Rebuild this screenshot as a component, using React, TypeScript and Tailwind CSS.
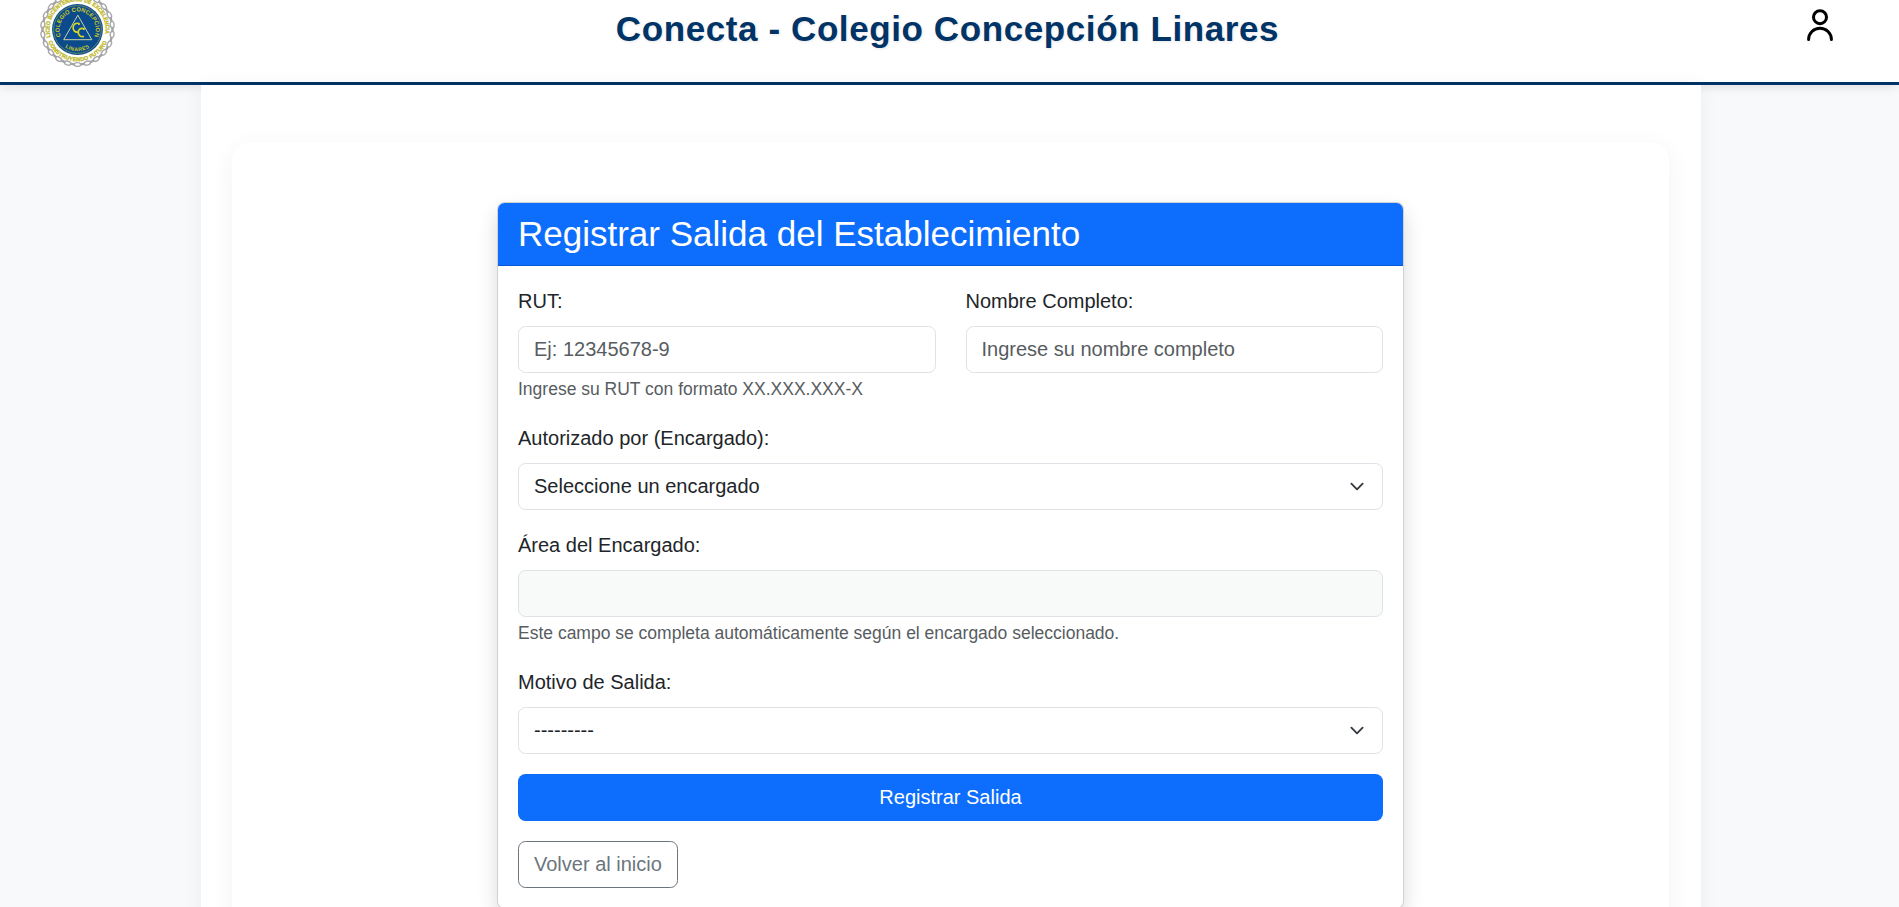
import type { ReactNode } from "react";

const inputBase =
  "h-[47px] w-full rounded-[7.5px] border border-[#dee2e6] px-[15px] text-[20px] leading-[30px] text-[#212529] outline-none";

const LINKS = Array.from({ length: 22 }, (_, i) => (i * 360) / 22);

function Logo() {
  return (
    <svg width="75" height="75" viewBox="-37.5 -37.5 75 75" className="block shrink-0" aria-hidden="true">
      <defs>
        <path id="ringTop" d="M-26.9 7.6 A28 28 0 1 1 26.9 7.6" />
        <path id="ringBottom" d="M-30 10.5 A31.8 31.8 0 0 0 30 10.5" />
        <path id="discTop" d="M-16 8.5 A18.1 18.1 0 1 1 16 8.5" />
        <path id="discBottom" d="M-18 12 A21.6 21.6 0 0 0 18 12" />
      </defs>
      <g fill="none">
        {LINKS.map((a) => (
          <g key={a} transform={`rotate(${a})`}>
            <ellipse cx="0" cy="-35" rx="3.2" ry="1.9" stroke="#a9a9ad" strokeWidth="1.4" />
            <path d="M3.6 -34.8 L6.4 -34.4" stroke="#a2a2a6" strokeWidth="2.4" strokeLinecap="round" />
          </g>
        ))}
      </g>
      <circle r="25.4" fill="#0b4b8b" />
      <circle r="23.9" fill="none" stroke="#7f9d62" strokeWidth="0.7" />
      <g fontFamily="Liberation Sans, Arial, sans-serif" fontWeight="700" fill="#d0cc22">
        <text fontSize="5.8" textLength="100" lengthAdjust="spacingAndGlyphs" fill="#bdb824" stroke="#bdb824" strokeWidth="0.3">
          <textPath href="#ringTop">LICEO BICENTENARIO DE EXCELENCIA</textPath>
        </text>
        <text fontSize="5.5" textAnchor="middle" letterSpacing="0.15" fill="#bdb824" stroke="#bdb824" strokeWidth="0.3">
          <textPath href="#ringBottom" startOffset="50%">CONSTRUYENDO FUTURO</textPath>
        </text>
        <text fontSize="5.9" textAnchor="middle" letterSpacing="0.1">
          <textPath href="#discTop" startOffset="50%">COLEGIO CONCEPCION</textPath>
        </text>
        <text fontSize="5.2" textAnchor="middle" letterSpacing="0.5">
          <textPath href="#discBottom" startOffset="50%">LINARES</textPath>
        </text>
      </g>
      <path d="M0.3 -14.3 L14.3 10.2 H-13.8 Z" fill="#0a4c93" stroke="#c9d3a0" strokeWidth="1" />
      <g fill="none" stroke="#dcd820" strokeWidth="1.7">
        <path d="M1.4 -4.6 V-6 C-6 -8 -6.4 3.4 0.6 2.6" />
        <path d="M6.4 0.6 V-0.9 C-1 -3 -1.4 8.4 6.6 7" />
      </g>
    </svg>
  );
}

function UserIcon() {
  return (
    <svg width="30" height="40" viewBox="0 0 30 40" fill="none" stroke="#000" strokeWidth="3" strokeLinecap="round" aria-hidden="true">
      <circle cx="15" cy="12.2" r="6.5" />
      <path d="M3.6 34.6 C3.6 28.2 8.7 23.2 15 23.2 C21.3 23.2 26.4 28.2 26.4 34.6" />
    </svg>
  );
}

function Label({ children }: { children: ReactNode }) {
  return <label className="mb-[10px] block leading-[30px]">{children}</label>;
}

function Hint({ children }: { children: ReactNode }) {
  return <div className="mt-[4px] pb-px text-[17.5px] leading-[25px] text-[#575c61]">{children}</div>;
}

function SelectBox({ value }: { value: string }) {
  return (
    <button type="button" className={`${inputBase} flex items-center justify-between bg-white text-left`}>
      <span className="pb-[2px]">{value}</span>
      <svg width="20" height="15" viewBox="0 0 16 16" fill="none" stroke="#343a40" strokeWidth="2" strokeLinecap="round" strokeLinejoin="round" aria-hidden="true">
        <path d="m2 5 6 6 6-6" />
      </svg>
    </button>
  );
}

export default function App() {
  return (
    <div className="flex h-[907px] flex-col overflow-hidden bg-[#f8f9fb] font-['Liberation_Sans',Arial,sans-serif] text-[20px] leading-[30px] text-[#212529]">
      <header className="h-[85px] shrink-0 border-b-3 border-[#003366] bg-white shadow-[0_2px_10px_rgba(0,0,0,0.1)]">
        <div className="flex h-[58px] items-center justify-between pr-[64px] pl-[40px]">
          <Logo />
          <h1 className="mr-[25px] text-[35px] leading-[42px] font-bold tracking-[0.6px] whitespace-nowrap text-[#003366] [text-shadow:1px_1px_3px_rgba(0,0,0,0.1)]">
            Conecta - Colegio Concepción Linares
          </h1>
          <div className="-mt-[8px]">
            <UserIcon />
          </div>
        </div>
      </header>

      <main className="relative ml-[201px] h-[1000px] w-[1500px] shrink-0 bg-white px-[31px] pt-[57px] shadow-[0_0_19px_rgba(0,0,0,0.05)]">
        <section className="h-[1000px] w-[1437px] rounded-[19px] bg-white pt-[60px] shadow-[0_5px_25px_rgba(0,0,0,0.05)]">
          <div className="mx-auto w-[907px] rounded-[7.5px] border border-black/[0.175] bg-white shadow-[0_10px_20px_rgba(0,0,0,0.15)]">
            <div className="rounded-t-[6.5px] border-b border-[#0b59d2] bg-[#0d6efd] px-[20px] py-[10px]">
              <h3 className="text-[35px] leading-[42px] font-normal text-white">Registrar Salida del Establecimiento</h3>
            </div>
            <form className="p-[20px]" onSubmit={(e) => e.preventDefault()}>
              <div className="mb-[20px] grid grid-cols-2 gap-[30px]">
                <div>
                  <Label>RUT:</Label>
                  <input className={`${inputBase} block bg-white placeholder:text-[#575c61]`} placeholder="Ej: 12345678-9" />
                  <Hint>Ingrese su RUT con formato XX.XXX.XXX-X</Hint>
                </div>
                <div>
                  <Label>Nombre Completo:</Label>
                  <input className={`${inputBase} block bg-white placeholder:text-[#575c61]`} placeholder="Ingrese su nombre completo" />
                </div>
              </div>
              <div className="mb-[20px]">
                <Label>Autorizado por (Encargado):</Label>
                <SelectBox value="Seleccione un encargado" />
              </div>
              <div className="mb-[20px]">
                <Label>Área del Encargado:</Label>
                <input className={`${inputBase} block bg-[#f8faf9]`} readOnly />
                <Hint>Este campo se completa automáticamente según el encargado seleccionado.</Hint>
              </div>
              <div className="mb-[20px]">
                <Label>Motivo de Salida:</Label>
                <SelectBox value="---------" />
              </div>
              <button type="submit" className="mb-[20px] block h-[47px] w-full rounded-[7.5px] bg-[#0d6efd] pb-[2px] text-white">
                Registrar Salida
              </button>
              <button type="button" className="block h-[47px] rounded-[7.5px] border border-[#6c757d] px-[15px] pb-[2px] text-[#6c757d]">
                Volver al inicio
              </button>
            </form>
          </div>
        </section>
      </main>
    </div>
  );
}
